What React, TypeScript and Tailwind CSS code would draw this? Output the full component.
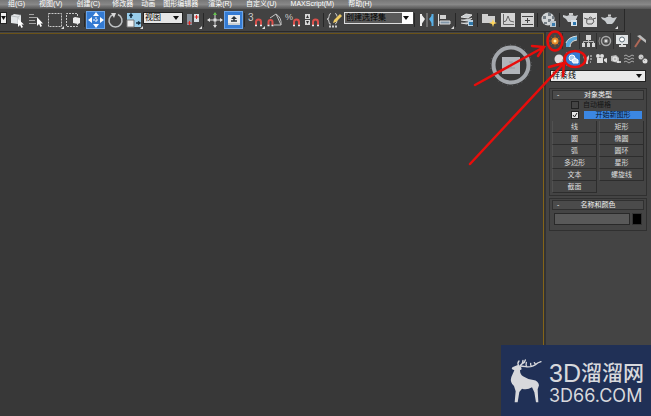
import type { ReactNode } from "react"

const menus = [
  { label: "组(G)", gap: "ml-2" },
  { label: "视图(V)", gap: "ml-3.5" },
  { label: "创建(C)", gap: "ml-3.5" },
  { label: "修改器", gap: "ml-3" },
  { label: "动画", gap: "ml-2" },
  { label: "图形编辑器", gap: "ml-2" },
  { label: "渲染(R)", gap: "ml-2.5" },
  { label: "自定义(U)", gap: "ml-3.5" },
  { label: "MAXScript(M)", gap: "ml-3.5" },
  { label: "帮助(H)", gap: "ml-3.5" },
]

const shapes = ["线", "矩形", "圆", "椭圆", "弧", "圆环", "多边形", "星形", "文本", "螺旋线", "截面"]

function Tool({ label, active, children }: { label: string; active?: boolean; children: ReactNode }) {
  return (
    <button
      type="button"
      aria-label={label}
      className={
        active
          ? "flex h-[18px] w-[19px] shrink-0 items-center justify-center border border-[#6ba5ea] bg-[#347bd3]"
          : "flex h-[18px] w-[19px] shrink-0 items-center justify-center"
      }
    >
      <svg viewBox="0 0 18 18" className="h-[18px] w-[18px] shrink-0" fill="none">
        {children}
      </svg>
    </button>
  )
}

function Divider() {
  return <span className="mx-px h-3.5 w-px shrink-0 bg-[#272727]" />
}

function Corner() {
  return <path d="M18 15v3h-3z" fill="#ddd" />
}

function Magnet() {
  return (
    <>
      <path d="M9 14v-3a2.500 2.500 0 0 1 5 0v3" stroke="#d9504b" strokeWidth="2" />
      <path d="M8 14.500h2M13 14.500h2" stroke="#eee" strokeWidth="1.500" />
    </>
  )
}

function Caret() {
  return (
    <svg viewBox="0 0 6 4" className="pointer-events-none absolute top-1 right-1 h-1 w-1.5">
      <path d="M0 0h6L3 4z" fill="#111" />
    </svg>
  )
}

function Toolbar() {
  return (
    <div className="flex h-[23px] w-[625px] shrink-0 items-center border-r border-b border-[#292929] bg-[#424242]">
      <button type="button" aria-label="选择过滤器" className="relative mb-1 flex h-3 w-[7px] shrink-0 items-center border border-[#222] bg-[#eee]">
        <svg viewBox="0 0 5 4" className="h-1 w-[5px]">
          <path d="M0 0h5L2.500 4z" fill="#111" />
        </svg>
      </button>
      <Tool label="选择对象">
        <path d="M3 5l3-2 7 1v8l-3 1-7-1z" fill="#e3e6e8" />
        <path d="M3 5l7 1 3-2M10 6v7" stroke="#bcc1c4" />
        <path d="M10 8v8l2-2 1.500 3 1.500-1-1.500-2.500H16z" fill="#fff" />
      </Tool>
      <Tool label="按名称选择">
        <path d="M2 3.500h5M2 6.500h8M2 9.500h6M2 12.500h7" stroke="#a5a5a5" />
        <path d="M10 6v9l2-2 1.500 3 1.500-1-1.500-2.500H16z" fill="#fff" />
      </Tool>
      <Tool label="矩形选择区域">
        <path d="M2.500 2.500h13v13h-13z" stroke="#c9c9c9" strokeDasharray="2 1" />
        <Corner />
      </Tool>
      <Tool label="窗口/交叉">
        <path d="M12.500 5V2.500h-11v13h11V13" stroke="#c9c9c9" strokeDasharray="2 1" />
        <path d="M8 7l2-1 5 1v5l-2 1-5-1z" fill="#eee" />
      </Tool>
      <Divider />
      <Tool label="选择并移动" active>
        <path d="M9 1l3 4H6zM9 17l3-4H6zM1 9l4-3v6zM17 9l-4-3v6z" fill="#fff" />
        <path d="M9 6v6M6 9h6" stroke="#fff" strokeDasharray="2 1" />
      </Tool>
      <Tool label="选择并旋转">
        <path d="M7 3.500a6.500 6.500 0 1 0 5 0" stroke="#c0c3c5" strokeWidth="1.500" />
        <path d="M5 2h5L8 7z" fill="#d8d8d8" />
      </Tool>
      <Tool label="选择并缩放">
        <path d="M2 2h14v14H2z" fill="#98cdeb" />
        <path d="M2 9h7v7H2z" fill="#eee" stroke="#777" />
        <path d="M6 7V3M4.500 5L6 3l1.500 2M11 12h4M13 10.500l2 1.500-2 1.500" stroke="#173246" strokeWidth="1.500" />
        <Corner />
      </Tool>
      <div className="relative mb-1 shrink-0">
        <select
          aria-label="参考坐标系"
          className="block h-3 w-10 appearance-none border border-[#222] bg-[#e6e6e6] pl-px text-[8px] leading-[10px] text-black"
        >
          <option>视图</option>
        </select>
        <Caret />
      </div>
      <Tool label="使用轴点中心">
        <path d="M3 3h5v11H3z" fill="#8a949e" />
        <path d="M10 3h5v8h-5z" fill="#d6dde2" />
        <path d="M5.500 10v4M3.500 12h4M12.500 4v4M10.500 6h4" stroke="#e22822" />
        <Corner />
      </Tool>
      <Divider />
      <Tool label="选择并操纵">
        <path d="M9 2v14M2 9h14" stroke="#d7d7d7" />
        <path d="M9 1l2 3H7z" fill="#64c24b" />
        <path d="M9 17l2-3H7zM1 9l3-2v4zM17 9l-3-2v4zM7.500 7.500h3v3h-3z" fill="#ddd" />
      </Tool>
      <Tool label="键盘快捷键覆盖" active>
        <path d="M3 4h12v10H3z" fill="#e9eced" />
        <path d="M9 5l3 3H6z" fill="#27313a" />
        <path d="M6 10h6M9 7v3" stroke="#27313a" strokeWidth="1.500" />
        <path d="M3 13h12" stroke="#a9b4bb" />
      </Tool>
      <Divider />
      <Tool label="捕捉开关">
        <text x="1" y="10" fontSize="10" fill="#ccc">3</text>
        <Magnet />
        <Corner />
      </Tool>
      <Tool label="角度捕捉">
        <path d="M4 7l6-4 5 11H8M10 3q6 4 5 11" stroke="#c2c2c2" />
        <path d="M2.500 14v-3a2 2 0 0 1 4 0v3" stroke="#d9504b" strokeWidth="2" />
        <path d="M1.500 14.500h2M5.500 14.500h2" stroke="#eee" strokeWidth="1.500" />
      </Tool>
      <Tool label="百分比捕捉">
        <text x="0" y="9" fontSize="9" fill="#ccc">%</text>
        <Magnet />
      </Tool>
      <Tool label="微调器捕捉">
        <path d="M1 3h5v5H1zM1 9h5v5H1z" fill="#d7d7d7" />
        <path d="M2 7l1.500-3L5 7zM2 10h3l-1.500 3z" fill="#333" />
        <Magnet />
      </Tool>
      <Divider />
      <Tool label="编辑命名选择集">
        <path d="M5 2.500q-2 0-2 3T1 8q2 0 2 3t2 2M9 2.500q2 0 2 3M11 9q0 4-2 4" stroke="#ccc" />
        <path d="M14 3l2 2-6 6-3 1 1-3z" fill="#efcb63" />
        <path d="M3 15.500h8" stroke="#ccc" strokeDasharray="2 1" strokeWidth="2" />
      </Tool>
      <div className="relative mb-1 shrink-0">
        <select
          aria-label="命名选择集"
          className="block h-3 w-[69px] appearance-none border border-[#ddd] bg-[#5a5a5a] pl-px text-[8px] leading-[10px] text-black"
        >
          <option>创建选择集</option>
        </select>
        <span className="pointer-events-none absolute top-0 right-0 h-3 w-[11px] bg-white" />
        <Caret />
      </div>
      <Divider />
      <Tool label="镜像">
        <path d="M4 3l4 5-4 6z" fill="#eee" />
        <path d="M16 3l-4 5 4 6z" fill="#59afe4" />
        <path d="M4 3v12" stroke="#eee" strokeWidth="2" />
        <path d="M15.500 3v12" stroke="#59afe4" strokeWidth="2" />
        <path d="M10 2v14" stroke="#999" />
      </Tool>
      <Tool label="对齐">
        <path d="M2.500 3v12" stroke="#ddd" />
        <path d="M4 4h6v4H4z" fill="#d2d2d2" />
        <path d="M4 10h10v3H4z" fill="#8196a8" stroke="#ddd" />
        <Corner />
      </Tool>
      <Divider />
      <Tool label="层管理器">
        <path d="M3 6l5-3 6 1-4 3zM3 9l7 1 4-3M3 12l6 1 3-2" fill="#c6cbce" stroke="#e0e0e0" />
        <path d="M10 9h5v6h-5z" fill="#bad3e4" />
        <path d="M11 11h4v3h-4z" fill="#2f78aa" />
      </Tool>
      <Divider />
      <Tool label="石墨建模工具">
        <path d="M2 5V3h6v2h7v7H2z" fill="#cfcfcf" />
        <path d="M13 8l1 3 3 1-3 1-1 3-1-3-3-1 3-1z" fill="#ffd65c" />
      </Tool>
      <Tool label="曲线编辑器">
        <path d="M2 2h14v14H2z" fill="#d4d4d4" />
        <path d="M4.500 3v10.500H15M4 11l3-1 2-5 2 5 4 1" stroke="#666" />
      </Tool>
      <Tool label="图解视图">
        <path d="M3 2h13v14H3z" fill="#d4d4d4" />
        <path d="M4 5.500h11M4 13.500h11M9.500 7v5M7 9.500h5" stroke="#444" />
      </Tool>
      <Divider />
      <Tool label="材质编辑器">
        <circle cx="8" cy="8" r="6.500" fill="#d3d6d8" />
        <path d="M3 5h3v3H3zM8 2h3v3H8zM8 8h3v3H8zM4 11h3v2H4zM12 5h2v3h-2z" fill="#767f86" />
        <path d="M10 10h6v6h-6z" fill="#b9c6ce" />
        <path d="M12 12h3v3h-3z" fill="#387bae" />
      </Tool>
      <Divider />
      <Tool label="渲染设置">
        <path d="M1 4l4 1q3-2 8 0l3-1-3 7H6L4 8 1 6z" fill="#cacdd0" />
        <path d="M7 3h4" stroke="#ccc" strokeWidth="2" />
        <path d="M9 9h6v6H9z" fill="#d9e3ea" />
        <path d="M11 11h3v3h-3z" fill="#2c78b1" />
      </Tool>
      <Tool label="渲染帧窗口">
        <path d="M2 2h14v14H2z" fill="#dadada" />
        <path d="M3 7l3 1h6l3-1M6 8q-1 5 1 5h4q3-2 1-5M8 7q1-2 3 0" stroke="#555" />
      </Tool>
      <Tool label="渲染产品">
        <path d="M1 6l4 1q4-3 8 0l4-1-3 5-2 2H7l-2-3-3-2z" fill="#c7cbce" />
        <path d="M8 4.500h3" stroke="#ccc" strokeWidth="2" />
        <Corner />
      </Tool>
    </div>
  )
}

function PanelTab({ label, children }: { label: string; children: ReactNode }) {
  return (
    <button type="button" aria-label={label} className="flex h-4 w-[17px] items-center justify-center border-r border-[#303030]">
      <svg viewBox="0 0 14 14" className="h-3.5 w-3.5 shrink-0" fill="none">
        {children}
      </svg>
    </button>
  )
}

function Category({ label, active, children }: { label: string; active?: boolean; children: ReactNode }) {
  return (
    <button
      type="button"
      aria-label={label}
      className={active ? "flex h-3.5 w-3.5 items-center justify-center bg-[#347bd3]" : "flex h-3.5 w-3.5 items-center justify-center"}
    >
      <svg viewBox="0 0 12 12" className="h-3 w-3 shrink-0" fill="none">
        {children}
      </svg>
    </button>
  )
}

function Rollout({ title, children }: { title: string; children: ReactNode }) {
  return (
    <section className="border border-[#303030] px-0.5 pt-px pb-0.5">
      <button type="button" className="relative flex h-2.5 w-full items-center justify-center border border-[#303030] bg-[#4b4b4b] text-[7px] leading-[8px] text-[#eee]">
        <span className="absolute left-1">-</span>
        {title}
      </button>
      {children}
    </section>
  )
}

function CommandPanel() {
  return (
    <aside className="w-[105px] shrink-0 bg-[#444444]">
      <div className="mt-px flex h-4">
        <PanelTab label="创建">
          <path d="M8 1v12M2 7h12M4 3l8 8M12 3l-8 8" stroke="#8a5423" />
          <circle cx="8" cy="7" r="3.500" fill="#e58a2c" />
          <circle cx="8" cy="7" r="1.500" fill="#fff1a5" />
        </PanelTab>
        <PanelTab label="修改">
          <path d="M2 13V9q2-6 11-7v4Q6 6 6 13z" fill="#59a9dc" />
          <path d="M2 9q2-6 11-7M6 13q0-6 7-7" stroke="#ddd" />
        </PanelTab>
        <PanelTab label="层次">
          <path d="M5 1h5v5H5zM1 9h3v4H1zM6 9h3v4H6zM11 9h3v4h-3z" fill="#d5d5d5" />
          <path d="M7.500 6v3M2.500 9V7.500h10V9" stroke="#bbb" />
        </PanelTab>
        <PanelTab label="运动">
          <circle cx="8" cy="7" r="4.500" stroke="#aaa" strokeWidth="1.500" />
          <circle cx="8" cy="7" r="2" fill="#ddd" stroke="#777" />
          <path d="M2 3q-2 4 0 8" stroke="#888" />
        </PanelTab>
        <PanelTab label="显示">
          <path d="M1 1h12v9H1z" fill="#e1e4e6" />
          <circle cx="7" cy="5.500" r="2.500" fill="#fff" stroke="#62717b" />
          <path d="M4 12h7M7 10v2" stroke="#ddd" strokeWidth="2" />
        </PanelTab>
        <button type="button" aria-label="工具" className="flex h-4 w-[17px] items-center justify-center">
          <svg viewBox="0 0 14 14" className="h-3.5 w-3.5 shrink-0" fill="none">
            <path d="M8 4L2 13" stroke="#b06958" strokeWidth="2" />
            <path d="M4 2l3-1 6 5v3L9 6z" fill="#bbb" />
          </svg>
        </button>
      </div>
      <div className="mt-[3px] flex pl-1.5">
        <Category label="几何体">
          <circle cx="6" cy="6" r="4.500" fill="#e2dfdf" />
          <path d="M6 10q4-1 4-4" stroke="#aaa" />
        </Category>
        <Category label="图形" active>
          <circle cx="5" cy="5" r="3" fill="#a8c8ea" stroke="#fff" />
          <path d="M5 7l3-2 3 2v3H6z" fill="#d5e5f4" stroke="#fff" />
        </Category>
        <Category label="灯光">
          <path d="M2 3l3 2 3-3v4L7 8v3H5V8L3 6z" fill="#ccc" />
          <path d="M9 3h2M9 6h2M9 9h1" stroke="#ddd" />
        </Category>
        <Category label="摄影机">
          <circle cx="3" cy="3" r="2" fill="#ddd" />
          <circle cx="7" cy="3" r="2" fill="#ddd" />
          <path d="M2 5h6v5H2zM9 6l3-1v5L9 8z" fill="#ddd" />
        </Category>
        <Category label="辅助对象">
          <path d="M2 3l5-1 3 3v5L5 9 2 8z" fill="#bbb" />
          <circle cx="6" cy="6" r="2" stroke="#eee" />
          <path d="M8 9h4" stroke="#eee" strokeWidth="1.500" />
        </Category>
        <Category label="空间扭曲">
          <path d="M1 3l2-1 3 2 3-2 2 1M1 6l2-1 3 2 3-2 2 1M1 9l2-1 3 2 3-2 2 1" stroke="#aaa" />
        </Category>
        <Category label="系统">
          <circle cx="4" cy="4" r="2.500" fill="#ccc" />
          <circle cx="8" cy="8" r="2.500" fill="#ddd" />
          <path d="M4 4l4 4" stroke="#999" />
        </Category>
      </div>
      <div className="relative mt-1 mr-[5px] ml-1">
        <select
          aria-label="图形类别"
          className="block h-3 w-full appearance-none border border-[#222] bg-[#e9e9e9] pl-px text-[8px] leading-[10px] text-black"
        >
          <option>样条线</option>
        </select>
        <Caret />
      </div>
      <div className="mt-1.5 mr-1 ml-[3px] flex flex-col gap-0.5">
        <Rollout title="对象类型">
          <div className="mb-0.5 text-[7px] leading-[8px] text-[#151515]">
            <label className="flex h-2.5 items-center gap-1 pl-[19px]">
              <input type="checkbox" className="h-2 w-2 appearance-none border border-[#222]" />
              自动栅格
            </label>
            <div className="flex h-[9px] items-center gap-[5px] pr-0.5 pl-[19px]">
              <span className="relative h-2 w-2 shrink-0">
                <input
                  type="checkbox"
                  aria-label="开始新图形"
                  defaultChecked
                  className="block h-2 w-2 appearance-none border border-[#222] bg-[#e5e5e5]"
                />
                <svg viewBox="0 0 8 8" className="pointer-events-none absolute inset-0 h-2 w-2" fill="none">
                  <path d="M2 4l1.500 2L6 2" stroke="#222" />
                </svg>
              </span>
              <button type="button" className="h-2 flex-1 bg-[#3b87e3] text-[7px] leading-[8px] text-[#08101d]">
                开始新图形
              </button>
            </div>
          </div>
          <div className="grid grid-cols-2 gap-x-0.5">
            {shapes.map((shape) => (
              <button
                type="button"
                key={shape}
                className="h-3 border-r border-b border-l border-r-[#2d2d2d] border-b-[#2d2d2d] border-l-[#515151] text-[7px] leading-[11px] text-[#ddd]"
              >
                {shape}
              </button>
            ))}
          </div>
        </Rollout>
        <Rollout title="名称和颜色">
          <div className="my-[3px] flex gap-0.5 px-0.5">
            <input
              type="text"
              aria-label="名称"
              className="h-3 min-w-0 flex-1 border border-[#292929] bg-[#595959] text-[7px] text-[#ddd]"
            />
            <button type="button" aria-label="颜色" className="h-3 w-2.5 border border-[#333] bg-black" />
          </div>
        </Rollout>
      </div>
    </aside>
  )
}

function ViewCube() {
  return (
    <svg viewBox="0 0 44 44" className="h-11 w-11" fill="none">
      <circle cx="22" cy="22" r="20.500" stroke="#5c5e60" strokeDasharray="1 4" />
      <circle cx="22" cy="22" r="17.500" stroke="#a4a8ad" strokeWidth="4" />
      <path d="M13 14h18v17H13z" fill="#b2b5ba" />
      <path d="M20 19h4M22 19v6M19 25h7" stroke="#9699a0" />
    </svg>
  )
}

function Annotations() {
  return (
    <svg viewBox="0 0 191 180" className="pointer-events-none absolute top-0 right-0 h-[180px] w-[191px]" fill="none" stroke="#e80d0b" strokeWidth="2.500" strokeLinecap="round">
      <ellipse cx="95" cy="41" rx="7.500" ry="9.500" />
      <ellipse cx="115" cy="59" rx="10.500" ry="8" />
      <path d="M15 85L84 47M72 46l12 1-6 9" />
      <path d="M10 164L104 63M89 67l15-4-1 13" />
    </svg>
  )
}

function Watermark() {
  return (
    <div className="absolute right-0 bottom-0 flex h-[71px] w-[150px] items-center bg-[#203056] pl-2 text-[#d7d8dc]">
      <svg viewBox="58 65 108 144" className="h-12 w-9 shrink-0">
        <g fill="none" stroke="#d7d8dc" strokeWidth="4" strokeLinecap="round">
          <path d="M91 92q7 0 17 2 21 3 36-11l10-4M111 94q-3-5-1-13M125 93q-3-4-2-9M138 88l-4-6M87 91q-5-7 1-14M92 90q8-4 8-15M97 86q8-3 10-12" />
        </g>
        <path
          d="M68 96l16-7 10 5 2 8-5 3q0 12 9 18 15 10 31 11 15 2 17 16l-4 12 2 39h-7l-5-30-7-15q-15 9-30 4l-8 10-5 31h-9l3-33-5-16q-13-11-8-27l9-20-8-4z"
          fill="#d7d8dc"
        />
      </svg>
      <div className="ml-1 pt-1 whitespace-nowrap">
        <div className="flex items-center text-[21px] leading-6 font-medium">
          <span className="text-[25px]">3D</span>
          <span>溜溜网</span>
        </div>
        <div className="mt-0.5 font-['Inter','Liberation_Sans',sans-serif] text-[18px] leading-[18px]">3D66.COM</div>
      </div>
    </div>
  )
}

export default function App() {
  return (
    <div className="relative flex min-h-screen flex-col overflow-hidden bg-[#444444] font-['Liberation_Sans','Noto_Sans_CJK_SC',sans-serif]">
      <nav className="flex h-[9px] shrink-0 items-start bg-linear-to-b from-[#777777] via-[#888888] to-[#555555]">
        {menus.map((menu) => (
          <button type="button" key={menu.label} className={`${menu.gap} text-[7px] leading-[7px] whitespace-nowrap text-white`}>
            {menu.label}
          </button>
        ))}
      </nav>
      <Toolbar />
      <div className="flex flex-1">
        <main className="mt-px flex min-w-0 flex-1 justify-end border-t border-r border-t-[#6b5318] border-r-[#846418] bg-[#383838] pt-[9px] pr-2.5">
          <ViewCube />
        </main>
        <div className="w-0.5 shrink-0 bg-[#333]" />
        <CommandPanel />
      </div>
      <Annotations />
      <Watermark />
    </div>
  )
}
